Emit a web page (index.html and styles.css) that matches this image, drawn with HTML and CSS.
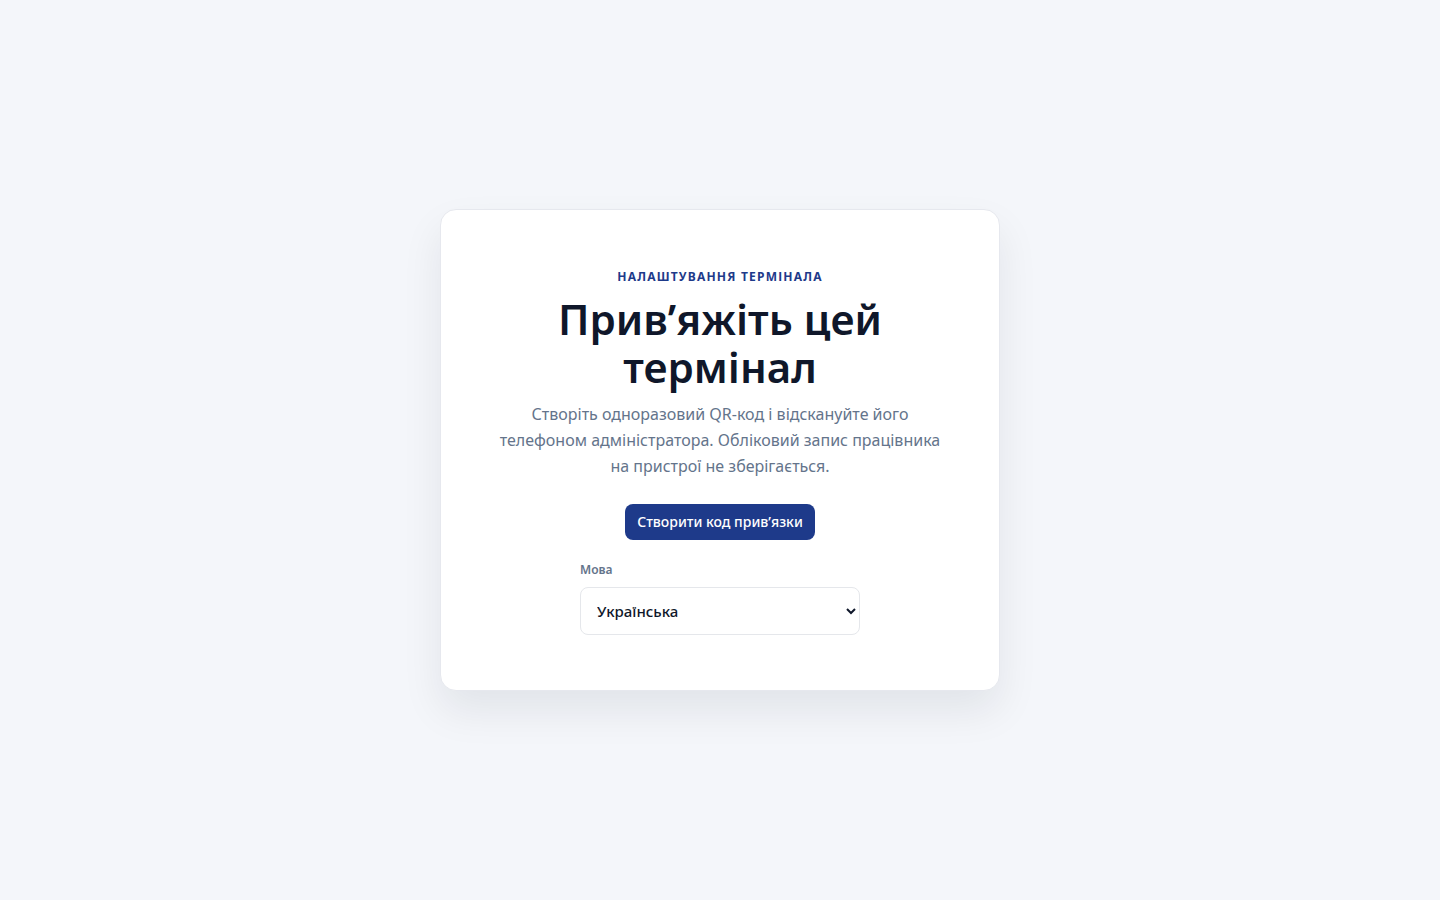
FILE: index.html
```html
<!DOCTYPE html>
<html lang="uk">
<head>
<meta charset="utf-8">
<title>Налаштування терміналу</title>
<link rel="stylesheet" href="styles.css">
</head>
<body>
<main class="page">
  <section class="card">
    <p class="eyebrow">Налаштування термінала</p>
    <h1 class="title">Прив’яжіть цей термінал</h1>
    <p class="lead">Створіть одноразовий QR-код і відскануйте його телефоном адміністратора. Обліковий запис працівника на пристрої не зберігається.</p>
    <button class="primary" type="button">Створити код прив’язки</button>
    <div class="field">
      <label class="field-label" for="lang">Мова</label>
      <select id="lang" class="select">
        <option>Українська</option>
        <option>English</option>
      </select>
    </div>
  </section>
</main>
</body>
</html>
```

FILE: styles.css
```css
* { box-sizing: border-box; }
html, body { margin: 0; padding: 0; }
body {
  background: #f4f6fa;
  font-family: "Noto Sans", "Open Sans", "Liberation Sans", sans-serif;
  color: #0f172a;
}
.page {
  min-height: 900px;
  display: flex;
  align-items: center;
  justify-content: center;
}
.card {
  width: 560px;
  background: #ffffff;
  border: 1px solid #e6e8ee;
  border-radius: 16px;
  box-shadow: 0 20px 40px rgba(15, 23, 42, 0.08);
  padding: 59px 56px 55px;
  display: flex;
  flex-direction: column;
  align-items: center;
  text-align: center;
}
.eyebrow {
  margin: 0;
  font-size: 12px;
  line-height: 16px;
  font-weight: 700;
  letter-spacing: 1.2px;
  text-transform: uppercase;
  color: #1e3a8a;
}
.title {
  margin: 10px 0 0;
  font-size: 42px;
  line-height: 48px;
  font-weight: 600;
  color: #0f172a;
  max-width: 380px;
}
.lead {
  margin: 10px 0 0;
  font-size: 16px;
  line-height: 26px;
  color: #64748b;
  max-width: 446px;
}
.primary {
  margin-top: 25px;
  height: 36px;
  padding: 0 12px 1px;
  border: none;
  border-radius: 8px;
  background: #1e3a8a;
  color: #ffffff;
  font-family: inherit;
  font-size: 14px;
  font-weight: 500;
  cursor: pointer;
}
.field {
  margin-top: 22px;
  width: 280px;
  display: flex;
  flex-direction: column;
  align-items: flex-start;
  gap: 9px;
}
.field-label {
  font-size: 12px;
  line-height: 16px;
  font-weight: 600;
  color: #64748b;
}
.select {
  width: 280px;
  height: 48px;
  padding: 0 10px 1px 12px;
  border: 1px solid #e5e7eb;
  border-radius: 8px;
  background: #ffffff;
  color: #0f172a;
  font-family: inherit;
  font-size: 15px;
  font-weight: 500;
}
```
